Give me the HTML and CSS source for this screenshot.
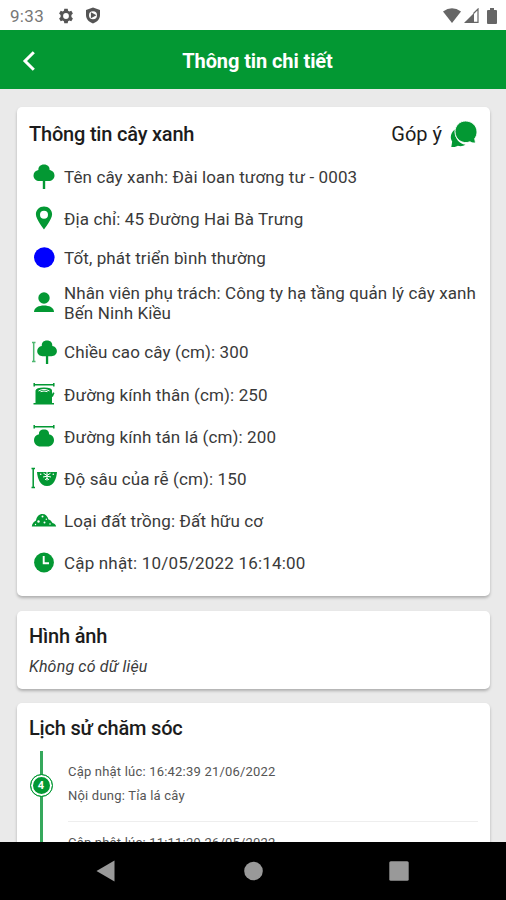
FILE: index.html
```html
<!DOCTYPE html>
<html lang="vi">
<head>
    <meta charset="UTF-8">
    <meta name="viewport" content="width=device-width, initial-scale=1.0">
    <title>Thông tin chi tiết</title>
    <link rel="stylesheet" href="styles.css">
</head>
<body>
    <div class="app">
        <div class="status-bar">
            <span class="time">9:33</span>
            <svg class="gear" width="16" height="16" viewBox="0 0 16 16">
                <path fill-rule="evenodd" d="M6.3 .7h3.4l.4 2 1.2.7 2-.7 1.6 2.8-1.5 1.4v2.2l1.5 1.4-1.6 2.8-2-.7-1.2.7-.4 2H6.3l-.4-2-1.2-.7-2 .7-1.6-2.8 1.5-1.4V6.9L1.1 5.5l1.6-2.8 2 .7 1.2-.7zM8 5.1a2.9 2.9 0 1 0 0 5.800 2.900 2.900 0 0 0 0-5.800z"/>
            </svg>
            <svg class="shield" width="16" height="17" viewBox="0 0 16 17">
                <path fill-rule="evenodd" d="M8 .5l7 2.500v5c0 4-2.800 7-7 8.500C3.800 15 1 12 1 8V3zM8 4.200a4 4 0 1 0 0 8 4 4 0 0 0 0-8zM5.900 5.200l5.500 3-5.500 3z"/>
            </svg>
            <div class="status-right">
                <svg width="18" height="15" viewBox="0 0 18 15"><path d="M0 3.500Q9-3 18 3.500L9 15z"/></svg>
                <svg class="signal" width="15" height="15" viewBox="0 0 15 15">
                    <path d="M0 15L10 5v10z"/>
                    <path d="M9.500 5.500L14 1v13.300H1.500" fill="none" stroke="#666" stroke-width="1.200"/>
                </svg>
                <svg class="battery" width="10" height="16" viewBox="0 0 10 16"><path d="M3 0h4v2h2q1 0 1 1v12q0 1-1 1H1q-1 0-1-1V3q0-1 1-1h2z"/></svg>
            </div>
        </div>

        <div class="header">
            <svg class="back" width="14" height="20" viewBox="0 0 14 20"><path d="M11.800 1.300L3 10l8.800 8.700"/></svg>
            <h1>Thông tin chi tiết</h1>
        </div>

        <div class="content">
            <div class="card info">
                <div class="card-top">
                    <h2>Thông tin cây xanh</h2>
                    <div class="feedback">
                        <span>Góp ý</span>
                        <svg width="27" height="26" viewBox="0 0 27 26">
                            <path d="M5 8.500C.5 11.500-.3 17 2.200 20.500L1.300 26c3 .2 5-.3 6.500-1.300 2.500.9 5.500.4 7.700-.9C8.500 23 3.800 16 5 8.500z"/>
                            <path d="M15.500 0C22 0 27 4.800 27 11c0 2.800-1 5-2.300 6.600L25.500 22c-2 .2-4-.3-5.500-1.200C12.500 23.600 5 18.500 5 10.800 5 4.800 9.500 0 15.500 0z" stroke="#fff" stroke-width=".9"/>
                        </svg>
                    </div>
                </div>
                <ul class="rows">
                    <li>
                        <svg class="icon" viewBox="0 0 26 26">
                            <path d="M13 .5c-3.700 0-5.900 2.400-5.600 5.600C4.600 6.500 2.500 8.800 2.500 11.500c0 3.500 2.700 5.500 5.800 5.500h3.500v8h2.400v-8h3.500c3.100 0 5.800-2 5.800-5.500 0-2.700-2.100-5-4.900-5.400C18.900 2.900 16.700.5 13 .5z"/>
                        </svg>
                        <span>Tên cây xanh: Đài loan tương tư - 0003</span>
                    </li>
                    <li>
                        <svg class="icon" viewBox="0 0 26 26">
                            <path fill-rule="evenodd" d="M13 .5c-4.600 0-8.100 3.400-8.100 7.800 0 5.200 8.100 15.200 8.100 15.200s8.100-10 8.100-15.200C21.100 3.900 17.600.5 13 .5zM13 4.700a4 4 0 1 1 0 8 4 4 0 0 1 0-8z"/>
                        </svg>
                        <span>Địa chỉ: 45 Đường Hai Bà Trưng</span>
                    </li>
                    <li class="state">
                        <svg class="icon" viewBox="0 0 26 26"><circle cx="13.300" cy="12.500" r="10.300" fill="#0000ff"/></svg>
                        <span>Tốt, phát triển bình thường</span>
                    </li>
                    <li class="staff">
                        <svg class="icon" viewBox="0 0 26 26">
                            <circle cx="13" cy="8" r="5.700"/>
                            <path d="M3 22c0-4.500 5-6.500 10-6.500s10 2 10 6.500z"/>
                        </svg>
                        <span>Nhân viên phụ trách: Công ty hạ tầng quản lý cây xanh<br>Bến Ninh Kiều</span>
                    </li>
                    <li>
                        <svg class="icon" viewBox="0 0 26 26">
                            <path d="M1 3.500h3.500M1 22.500h3.500M2.700 3.500v19" class="ruler thin"/>
                            <path d="M16 1.500c-3.500 0-5.500 2.200-5.200 5.400-2.700.4-4.600 2.500-4.600 5.200 0 3.300 2.500 5.200 5.400 5.200h3.300V25h2.300v-7.700h3.300c2.900 0 5.400-1.900 5.400-5.200 0-2.700-1.900-4.800-4.600-5.200.3-3.200-1.800-5.400-5.300-5.400z"/>
                        </svg>
                        <span>Chiều cao cây (cm): 300</span>
                    </li>
                    <li>
                        <svg class="icon" viewBox="0 0 26 26">
                            <path d="M3 2.700h20M3.200 1v3.500M22.800 1v3.500" class="ruler"/>
                            <path d="M4.500 8.500Q5 5.500 13 5.500t8 3v3.800l1-2 1.500.7-1.500 3.500-1 .5v6h2V22.500H2.500V21h2z"/>
                            <path d="M7.500 9q5.500-3.200 11 0M9.500 9.700q3.500-1.400 7 0" class="mark"/>
                        </svg>
                        <span>Đường kính thân (cm): 250</span>
                    </li>
                    <li>
                        <svg class="icon" viewBox="0 0 26 26">
                            <path d="M3 2.700h20M3.200 1v3.500M22.800 1v3.500" class="ruler"/>
                            <path d="M13 5.500c-3.400 0-5.300 2-5 4.800-3.100.5-5 2.800-5 5.700 0 4 2.900 6.500 6.400 6.500h7.200c3.500 0 6.400-2.500 6.400-6.500 0-2.900-1.900-5.200-5-5.700.3-2.800-1.600-4.800-5-4.800z"/>
                        </svg>
                        <span>Đường kính tán lá (cm): 200</span>
                    </li>
                    <li>
                        <svg class="icon" viewBox="0 0 26 26">
                            <path d="M.5 2.500h3.500M.5 21.500h3.500M2.200 2.500v19" class="ruler"/>
                            <path d="M6 6h20c-.4 6-3 14-10 14S6.400 12 6 6z"/>
                            <path d="M16 6v8.500M12.500 7.200l3.500 2.300 3.500-2.300M12 11l4-.8 4 .8M14 13.800l2-1.500 2 1.500" class="mark"/>
                            <g fill="#fff"><circle cx="9.700" cy="8.300" r=".8"/><circle cx="22.300" cy="8.300" r=".8"/></g>
                        </svg>
                        <span>Độ sâu của rễ (cm): 150</span>
                    </li>
                    <li>
                        <svg class="icon" viewBox="0 0 26 26">
                            <path d="M.8 18.500C1 15.500 3 13.500 5 12.500 5.700 8.500 8 6 11.500 6c3 0 5 2 6 5.500 2.500.5 3 2 4 3.500 2.200.3 3.200 1.700 3.700 3.500z"/>
                            <g fill="#fff"><circle cx="11.500" cy="8.500" r="1"/><circle cx="7.500" cy="13.500" r="1.200"/><circle cx="13.500" cy="14.500" r="1"/><circle cx="15.300" cy="11.200" r=".7"/><circle cx="19" cy="16" r=".8"/><circle cx="4.500" cy="16.500" r=".7"/></g>
                        </svg>
                        <span>Loại đất trồng: Đất hữu cơ</span>
                    </li>
                    <li>
                        <svg class="icon" viewBox="0 0 26 26">
                            <circle cx="13" cy="12.500" r="9.900"/>
                            <path d="M12.700 6v7.200h5.300" fill="none" stroke="#fff" stroke-width="1.900"/>
                        </svg>
                        <span class="updated">Cập nhật: 10/05/2022 16:14:00</span>
                    </li>
                </ul>
            </div>

            <div class="card images">
                <h2>Hình ảnh</h2>
                <p class="empty">Không có dữ liệu</p>
            </div>

            <div class="card history">
                <h2>Lịch sử chăm sóc</h2>
                <div class="timeline">
                    <div class="line"><span class="dot">4</span></div>
                    <div class="entries">
                        <div class="entry">
                            <p>Cập nhật lúc: 16:42:39 21/06/2022</p>
                            <p>Nội dung: Tỉa lá cây</p>
                        </div>
                        <div class="entry">
                            <p>Cập nhật lúc: 11:11:29 26/05/2022</p>
                        </div>
                    </div>
                </div>
            </div>
        </div>

        <div class="nav-bar">
            <svg width="20" height="22" viewBox="0 0 20 22"><path d="M18.500 .5v21L.5 11z"/></svg>
            <svg width="20" height="20" viewBox="0 0 20 20"><circle cx="10.500" cy="10" r="9.300"/></svg>
            <svg width="20" height="20" viewBox="0 0 20 20"><rect x=".3" y=".3" width="19.400" height="19.400" rx="1.500"/></svg>
        </div>
    </div>
</body>
</html>
```
FILE: styles.css
```css
* {
    box-sizing: border-box;
    margin: 0;
    padding: 0;
}
body {
    font-family: Roboto, "Liberation Sans", sans-serif;
    color: #3a3a3a;
}
.app {
    display: flex;
    flex-direction: column;
    width: 506px;
    height: 900px;
    overflow: hidden;
    background: #eaeaea;
}
h1, h2, p, span {
    white-space: nowrap;
}
svg {
    flex: none;
    display: block;
}
.status-bar {
    display: flex;
    align-items: center;
    flex: none;
    height: 30px;
    padding: 1px 9px 0 10px;
    background: #fff;
    fill: #555;
}
.time {
    width: 48px;
    font-size: 17px;
    letter-spacing: .3px;
    color: #777;
}
.shield {
    margin-left: 11px;
}
.status-right {
    display: flex;
    align-items: center;
    margin-left: auto;
    fill: #666;
}
.signal {
    margin-left: 3px;
}
.battery {
    margin-left: 8px;
}
.header {
    display: grid;
    grid-template-columns: 60px 1fr 60px;
    align-items: center;
    flex: none;
    height: 59px;
    padding-top: 2px;
    background: #039833;
    color: #fff;
}
.back {
    margin-left: 22px;
    fill: none;
    stroke: #fff;
    stroke-width: 3;
}
h1 {
    font-size: 20px;
    font-weight: 700;
    letter-spacing: -.1px;
    text-align: center;
    padding-left: 9px;
}
.content {
    flex: 1;
    min-height: 0;
    overflow: hidden;
    padding: 18px 16px 0 17px;
}
.card {
    padding: 0 12px;
    margin-bottom: 14.5px;
    background: #fff;
    border-radius: 5px;
    box-shadow: 0 2px 3px rgba(0, 0, 0, .25);
}
h2 {
    font-size: 20px;
    font-weight: 500;
    line-height: 24px;
    letter-spacing: -.2px;
    color: #1c1c1c;
}
.info {
    height: 489px;
}
.card-top {
    display: flex;
    justify-content: space-between;
    align-items: center;
    height: 49px;
    padding-top: 5px;
}
.feedback {
    display: flex;
    align-items: center;
    gap: 8px;
    margin-right: 1px;
    font-size: 20px;
    fill: #039833;
    color: #1c1c1c;
}
.rows {
    list-style: none;
}
.rows li {
    display: flex;
    align-items: center;
    height: 42.2px;
    gap: 9px;
    font-size: 17px;
    line-height: 20px;
    letter-spacing: .11px;
}
.rows .state {
    height: 35px;
}
.rows .staff {
    height: 56px;
}
.rows .updated {
    letter-spacing: .18px;
}
.icon {
    width: 26px;
    height: 26px;
    margin-left: 2px;
    margin-right: -2px;
    fill: #039833;
}
.ruler {
    fill: none;
    stroke: #039833;
    stroke-width: 1.5;
}
.thin {
    opacity: .7;
}
.mark {
    fill: none;
    stroke: #fff;
    stroke-width: 1;
}
.images {
    height: 78px;
    padding-top: 13px;
}
.empty {
    margin-top: 9px;
    font-size: 16px;
    line-height: 20px;
    letter-spacing: .17px;
    font-style: italic;
}
.history {
    height: 300px;
    padding-top: 13px;
}
.timeline {
    display: flex;
    height: 250px;
    margin-top: 11px;
}
.line {
    display: flex;
    justify-content: center;
    width: 24px;
    margin-right: 15px;
    background: linear-gradient(#35a85c, #35a85c) center / 3px 100% no-repeat;
}
.dot {
    width: 23px;
    height: 23px;
    margin-top: 23px;
    border: 1.5px solid #039833;
    border-radius: 50%;
    background: #039833;
    box-shadow: inset 0 0 0 2px #fff;
    color: #fff;
    font-size: 11px;
    font-weight: 700;
    line-height: 21px;
    text-align: center;
}
.entries {
    flex: 1;
}
.entry {
    height: 71px;
    padding-top: 9px;
    border-bottom: 1px solid #eee;
    font-size: 13px;
    line-height: 24px;
    letter-spacing: .2px;
    color: #555;
}
.nav-bar {
    display: flex;
    justify-content: space-between;
    align-items: center;
    flex: none;
    height: 58px;
    padding: 0 97px 0 96px;
    background: #000;
    fill: #999;
}
```
